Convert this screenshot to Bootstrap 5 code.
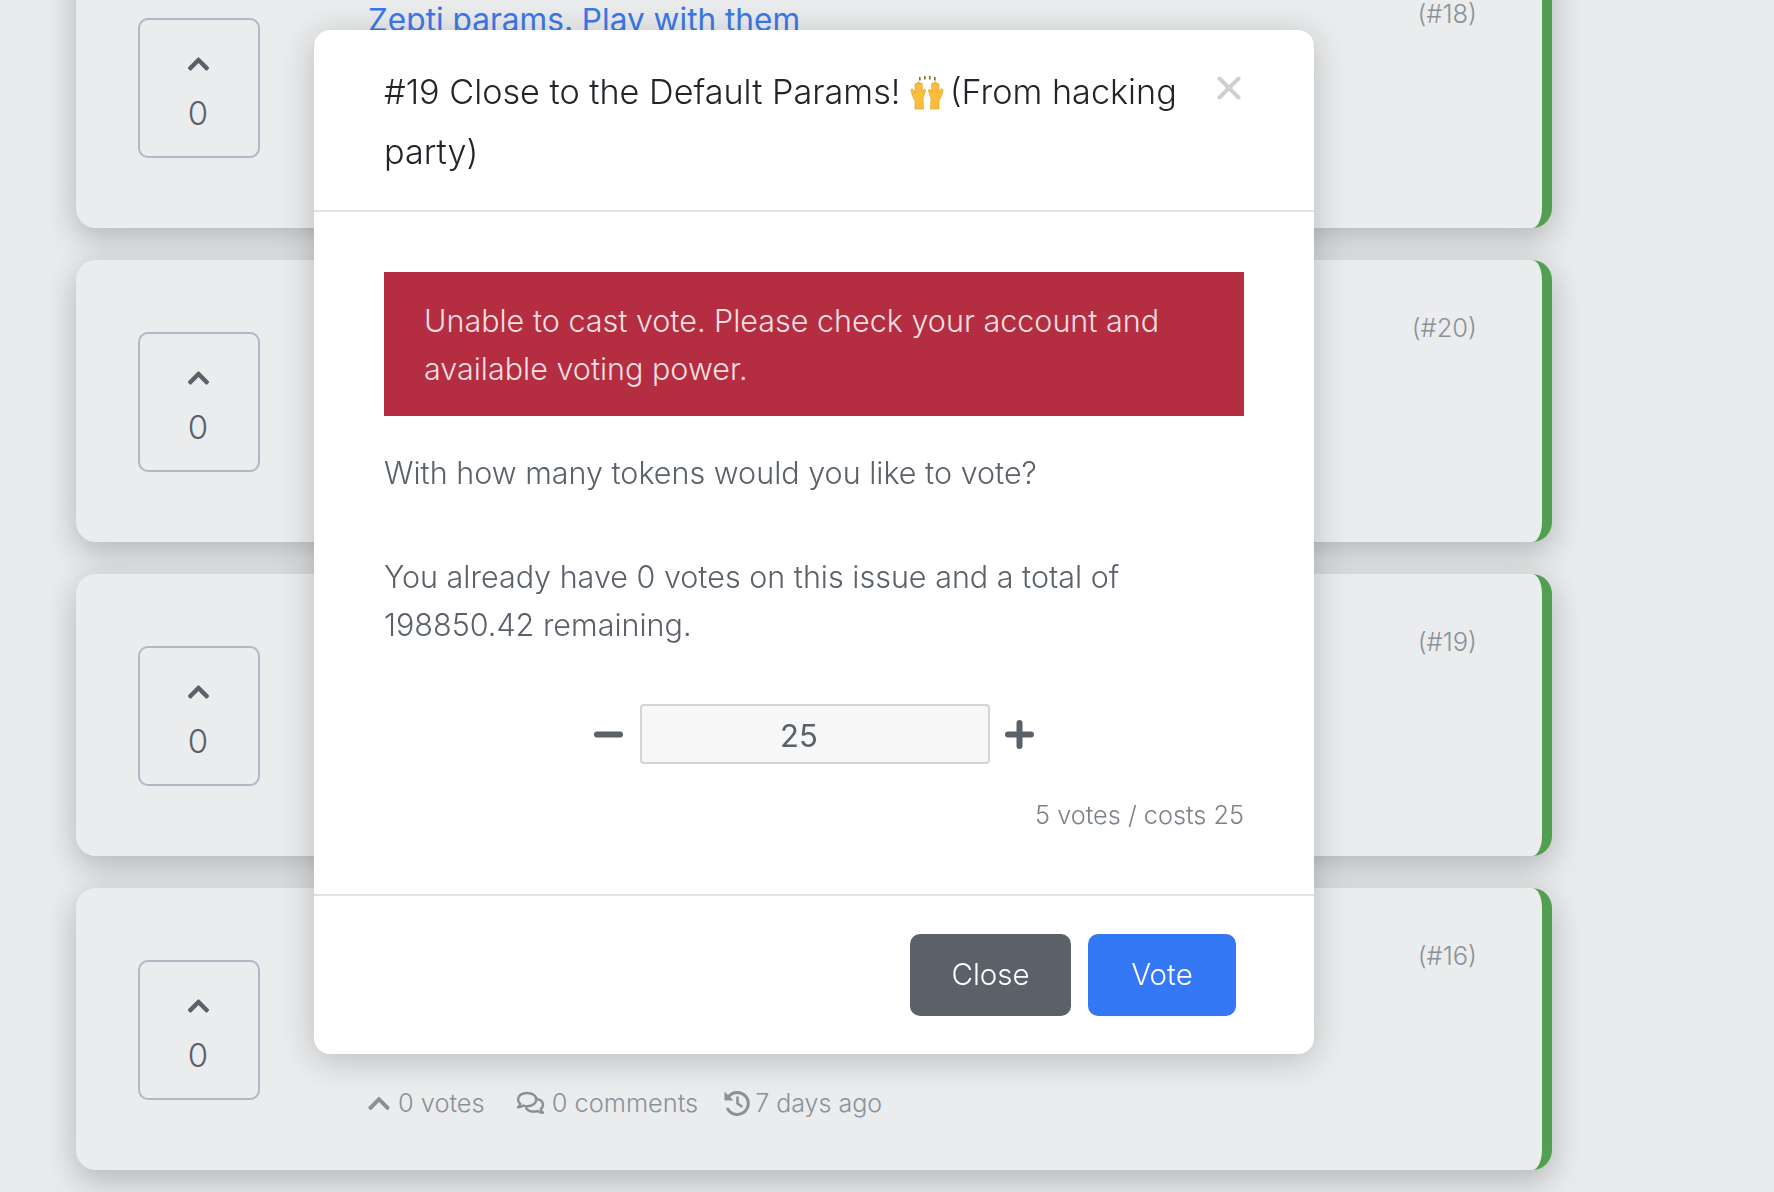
<!DOCTYPE html>
<html lang="en">
<head>
  <meta charset="UTF-8" />
  <title>Vote</title>
  <link href="https://cdn.jsdelivr.net/npm/bootstrap@5.3.3/dist/css/bootstrap.min.css" rel="stylesheet" />
  <style>
    body { background: #e9eaeb; font-family: "Inter", "Liberation Sans", sans-serif; font-weight: 300; color: #5a6169; }
    .issue-list { width: 1476px; margin: -54px 0 0 76px; padding-bottom: 80px; display: flex; flex-direction: column; gap: 32px; }
    .issue-card {
      height: 282px;
      flex-shrink: 0;
      background: #ebeced;
      border-right: 10px solid #529f52;
      border-radius: 20px;
      box-shadow: 0 14px 30px rgba(40, 44, 52, .2), 0 0 30px rgba(40, 44, 52, .08);
      padding: 72px 65px 0 62px;
    }
    .vote-box {
      width: 122px;
      height: 140px;
      border: 2px solid #b0b8c6;
      border-radius: 10px;
      font-size: 33px;
      line-height: 40px;
      padding: 32px 2px 0 0;
      flex-shrink: 0;
    }
    .vote-box svg { display: block; width: 21px; height: 24px; margin: 0 auto 17px; fill: #5a6169; stroke: #5a6169; stroke-width: 20px; }
    .issue-body { margin-left: 108px; height: 231px; margin-top: -72px; padding-top: 52px; }
    .issue-title { font-size: 31.6px; line-height: 44px; font-weight: 400; color: #3b78e7; }
    .issue-id { font-size: 25.500px; line-height: 30px; color: #8a9299; margin: 1px 0 0 auto; }
    .issue-meta { font-size: 25.400px; line-height: 32px; color: #8a9299; margin-top: auto; gap: 26px; }
    .issue-meta span { display: inline-flex; align-items: center; gap: 8px; }
    .issue-meta span.meta-comments { margin-left: 5px; gap: 7px; }
    .issue-meta span.meta-age { gap: 5px; font-size: 25px; }
    .issue-meta svg { display: block; flex-shrink: 0; }

    .modal-dialog.vote-dialog { max-width: none; width: 1000px; margin: 30px 0 0 314px; }
    .vote-dialog .modal-content { border: 0; border-radius: 16px; box-shadow: 0 6px 34px rgba(40, 44, 52, .25); }
    .vote-dialog .modal-header { padding: 32px 73px 28px 70px; border-bottom: 2px solid #e1e2e4; align-items: flex-start; }
    .vote-dialog .modal-title { font-size: 34.200px; line-height: 60px; font-weight: 300; color: #212529; }
    .hands-emoji { width: 34px; height: 34px; vertical-align: -6px; margin-right: -4px; }
    .close-x { background: none; border: 0; padding: 0; margin: 14px 0 0 auto; line-height: 0; }
    .vote-dialog .modal-body { padding: 60px 70px 59px; font-size: 30.500px; line-height: 48px; }
    .vote-alert { background: #b42d40; color: #f5dfe2; padding: 25px 40px 23px; margin-bottom: 33px; border: 0; border-radius: 0; }
    .vote-dialog p { margin-bottom: 56px; }
    .vote-dialog p.mb-tight { margin-bottom: 55px; }
    .token-row { gap: 16px; }
    .token-btn { background: none; border: 0; padding: 0; line-height: 0; }
    .token-input.form-control {
      width: 350px;
      height: 60px;
      margin: 0 -1px 0 1px;
      background: #f7f7f7;
      border: 2px solid #d4d4d4;
      border-radius: 4px;
      font-size: 31px;
      font-weight: 400;
      text-align: center;
      color: #5a6169;
      padding: 2px 32px 0 0;
    }
    .cost-note { font-size: 25.300px; line-height: 40px; color: #7b828a; margin-top: 31px; }
    .vote-dialog .modal-footer { padding: 38px 78px 38px; border-top: 2px solid #e1e2e4; gap: 17px; }
    .vote-dialog .modal-footer .btn { margin: 0; height: 82px; padding-bottom: 8px; border-radius: 10px; font-size: 29.500px; font-weight: 300; border: 0; color: #fff; }
    .btn-close-vote { width: 161px; background: #5a6169; }
    .btn-cast-vote { width: 148px; background: #3478f6; }
  </style>
</head>
<body>
  <svg class="d-none">
    <symbol id="i-chevron" viewBox="0 0 448 512"><path d="M240.971 130.524l194.343 194.343c9.373 9.373 9.373 24.569 0 33.941l-22.667 22.667c-9.357 9.357-24.522 9.375-33.901.04L224 227.495 69.255 381.516c-9.379 9.335-24.544 9.317-33.901-.04l-22.667-22.667c-9.373-9.373-9.373-24.569 0-33.941L207.03 130.525c9.372-9.373 24.568-9.373 33.941-.001z"/></symbol>
    <symbol id="i-comments" viewBox="0 0 30 26"><g fill="none" stroke="#8a9299" stroke-width="2.6" stroke-linejoin="round" stroke-linecap="round"><path d="M11.5 2C6 2 2 5 2 8.8c0 1.8 .9 3.4 2.3 4.6C4 15 3 16.4 2 17c2.4 0 4.4-.9 5.6-1.8 1.2 .4 2.5 .6 3.9 .6 5.5 0 9.5-3 9.5-7S17 2 11.500 2z"/><path d="M21.800 8.400c3.600 .7 6.200 3.100 6.200 6 0 1.700-.9 3.300-2.300 4.400 .3 1.700 1.300 3.100 2.300 3.900-2.400 0-4.400-1-5.600-1.900-1.200 .4-2.500 .6-3.900 .6-3.400 0-6.400-1.300-8-3.500"/></g></symbol>
    <symbol id="i-history" viewBox="0 0 26 26"><g fill="none" stroke="#8a9299" stroke-width="3" stroke-linecap="round" stroke-linejoin="round"><path d="M5 6.200A11 11 0 1 1 3.800 19"/><path d="M13.500 7.500v6l4 2.800" stroke-width="2.600"/></g><path d="M0.500 1.500v9h9z" fill="#8a9299"/></symbol>
  </svg>

  <main class="issue-list">
    <article class="issue-card d-flex">
      <div class="vote-box text-center"><svg><use href="#i-chevron"/></svg>0</div>
      <div class="issue-body d-flex flex-column flex-grow-1">
        <div class="d-flex">
          <a class="issue-title text-decoration-none" href="#">Zepti params. Play with them</a>
          <span class="issue-id">(#18)</span>
        </div>
      </div>
    </article>
    <article class="issue-card d-flex">
      <div class="vote-box text-center"><svg><use href="#i-chevron"/></svg>0</div>
      <div class="issue-body d-flex flex-column flex-grow-1">
        <div class="d-flex"><span class="issue-id">(#20)</span></div>
      </div>
    </article>
    <article class="issue-card d-flex">
      <div class="vote-box text-center"><svg><use href="#i-chevron"/></svg>0</div>
      <div class="issue-body d-flex flex-column flex-grow-1">
        <div class="d-flex"><span class="issue-id">(#19)</span></div>
      </div>
    </article>
    <article class="issue-card d-flex">
      <div class="vote-box text-center"><svg><use href="#i-chevron"/></svg>0</div>
      <div class="issue-body d-flex flex-column flex-grow-1">
        <div class="d-flex"><span class="issue-id">(#16)</span></div>
        <div class="issue-meta d-flex">
          <span><svg width="22" height="25" fill="#8a9299"><use href="#i-chevron"/></svg>0 votes</span>
          <span class="meta-comments"><svg width="29" height="25"><use href="#i-comments"/></svg>0 comments</span>
          <span class="meta-age"><svg width="26" height="26"><use href="#i-history"/></svg>7 days ago</span>
        </div>
      </div>
    </article>
  </main>

  <div class="modal d-block" tabindex="-1">
    <div class="modal-dialog vote-dialog">
      <div class="modal-content">
        <div class="modal-header">
          <h5 class="modal-title">#19 Close to the Default Params!
            <svg class="hands-emoji" viewBox="0 0 34 34">
              <g fill="#8a6a2a"><rect x="9" y="1" width="1.600" height="3.500"/><rect x="14" y="0" width="1.600" height="3.500"/><rect x="19" y="0" width="1.600" height="3.500"/><rect x="24" y="1" width="1.600" height="3.500"/></g>
              <path d="M5 33V25C3 21 1 17 1 14c0-1.500 2-1.500 2.500 0L5 17V8.500c0-1.500 2.300-1.500 2.400 0V7c0-1.500 2.400-1.500 2.500 0v1c.2-1.300 2.300-1.300 2.400 0v8l1.200-2c1-1.300 2.600-.5 2 1l-2.500 7L13.500 33z" fill="#fbbe3c" stroke="#e0951f" stroke-width=".6"/>
              <path d="M29 33V25C31 21 33 17 33 14c0-1.500-2-1.500-2.500 0L29 17V8.500c0-1.500-2.300-1.500-2.400 0V7c0-1.500-2.400-1.500-2.500 0v1c-.2-1.300-2.300-1.300-2.400 0v8l-1.200-2c-1-1.300-2.600-.5-2 1l2.500 7L20.500 33z" fill="#fbbe3c" stroke="#e0951f" stroke-width=".6"/>
            </svg>
            (From hacking party)</h5>
          <button type="button" class="close-x" aria-label="Close">
            <svg width="24" height="24" viewBox="0 0 24 24"><path d="M2.500 2.500l19 19M21.500 2.500l-19 19" stroke="#cdcfd1" stroke-width="4" stroke-linecap="round"/></svg>
          </button>
        </div>
        <div class="modal-body">
          <div class="alert vote-alert" role="alert">Unable to cast vote. Please check your account and available voting power.</div>
          <p>With how many tokens would you like to vote?</p>
          <p class="mb-tight">You already have 0 votes on this issue and a total of 198850.42 remaining.</p>
          <div class="token-row d-flex justify-content-center align-items-center">
            <button type="button" class="token-btn" aria-label="Less"><svg width="29" height="29" viewBox="0 0 29 29"><path d="M3 14.500h23" stroke="#5a6169" stroke-width="6" stroke-linecap="round"/></svg></button>
            <input class="form-control token-input" type="text" value="25" />
            <button type="button" class="token-btn" aria-label="More"><svg width="29" height="29" viewBox="0 0 29 29"><path d="M3 14.500h23M14.500 3v23" stroke="#5a6169" stroke-width="6" stroke-linecap="round"/></svg></button>
          </div>
          <div class="cost-note text-end">5 votes / costs 25</div>
        </div>
        <div class="modal-footer">
          <button type="button" class="btn btn-close-vote">Close</button>
          <button type="button" class="btn btn-cast-vote">Vote</button>
        </div>
      </div>
    </div>
  </div>
  <script src="https://cdn.jsdelivr.net/npm/bootstrap@5.3.3/dist/js/bootstrap.bundle.min.js"></script>
</body>
</html>
